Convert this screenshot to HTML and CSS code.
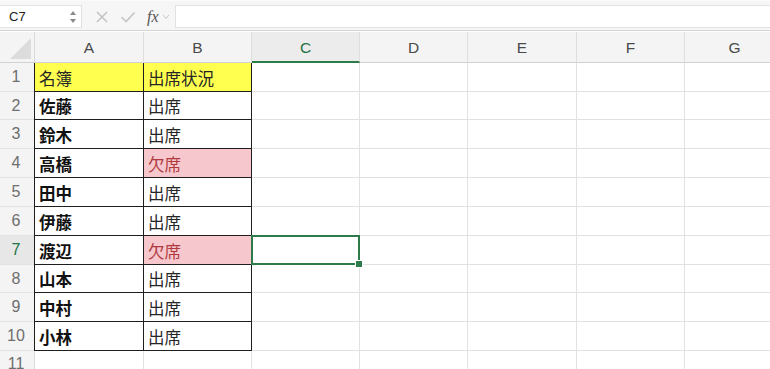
FILE: index.html
```html
<!DOCTYPE html>
<html lang="ja">
<head>
    <meta charset="UTF-8">
    <title>出席状況</title>
    <link rel="stylesheet" href="styles.css">
</head>
<body>
<div class="formula-bar">
    <div class="name-box">
        <span>C7</span>
        <svg class="spin" width="8" height="16" viewBox="0 0 8 16">
            <path d="M1 6 L4 2 L7 6 Z" fill="#8a8a8a"/>
            <path d="M1 10 L4 14 L7 10 Z" fill="#8a8a8a"/>
        </svg>
    </div>
    <div class="fx-tools">
        <svg width="14" height="14" viewBox="0 0 14 14">
            <path d="M2 2 L12 12 M12 2 L2 12" stroke="#c4c4c4" stroke-width="1.6" fill="none"/>
        </svg>
        <svg width="16" height="14" viewBox="0 0 16 14">
            <path d="M1.5 7 L6 11.5 L14.5 2.5" stroke="#c4c4c4" stroke-width="1.6" fill="none"/>
        </svg>
        <span class="fx">fx</span>
        <svg width="8" height="6" viewBox="0 0 8 6">
            <path d="M1 1 L4 4.5 L7 1" stroke="#c4c4c4" stroke-width="1" fill="none"/>
        </svg>
    </div>
    <div class="formula-input"></div>
</div>

<div class="sheet">
    <div class="corner"><span></span></div>
    <div class="col-head">A</div>
    <div class="col-head">B</div>
    <div class="col-head active">C</div>
    <div class="col-head">D</div>
    <div class="col-head">E</div>
    <div class="col-head">F</div>
    <div class="col-head">G</div>

    <div class="row-head">1</div>
    <div class="cell t first yellow">名簿</div>
    <div class="cell t yellow">出席状況</div>
    <div class="cell"></div><div class="cell"></div><div class="cell"></div><div class="cell"></div><div class="cell"></div>

    <div class="row-head">2</div>
    <div class="cell t first bold">佐藤</div>
    <div class="cell t">出席</div>
    <div class="cell"></div><div class="cell"></div><div class="cell"></div><div class="cell"></div><div class="cell"></div>

    <div class="row-head">3</div>
    <div class="cell t first bold">鈴木</div>
    <div class="cell t">出席</div>
    <div class="cell"></div><div class="cell"></div><div class="cell"></div><div class="cell"></div><div class="cell"></div>

    <div class="row-head">4</div>
    <div class="cell t first bold">高橋</div>
    <div class="cell t absent">欠席</div>
    <div class="cell"></div><div class="cell"></div><div class="cell"></div><div class="cell"></div><div class="cell"></div>

    <div class="row-head">5</div>
    <div class="cell t first bold">田中</div>
    <div class="cell t">出席</div>
    <div class="cell"></div><div class="cell"></div><div class="cell"></div><div class="cell"></div><div class="cell"></div>

    <div class="row-head">6</div>
    <div class="cell t first bold">伊藤</div>
    <div class="cell t">出席</div>
    <div class="cell"></div><div class="cell"></div><div class="cell"></div><div class="cell"></div><div class="cell"></div>

    <div class="row-head active">7</div>
    <div class="cell t first bold">渡辺</div>
    <div class="cell t absent">欠席</div>
    <div class="cell selected"></div><div class="cell"></div><div class="cell"></div><div class="cell"></div><div class="cell"></div>

    <div class="row-head">8</div>
    <div class="cell t first bold">山本</div>
    <div class="cell t">出席</div>
    <div class="cell"></div><div class="cell"></div><div class="cell"></div><div class="cell"></div><div class="cell"></div>

    <div class="row-head">9</div>
    <div class="cell t first bold">中村</div>
    <div class="cell t">出席</div>
    <div class="cell"></div><div class="cell"></div><div class="cell"></div><div class="cell"></div><div class="cell"></div>

    <div class="row-head">10</div>
    <div class="cell t first bold">小林</div>
    <div class="cell t">出席</div>
    <div class="cell"></div><div class="cell"></div><div class="cell"></div><div class="cell"></div><div class="cell"></div>

    <div class="row-head last">11</div>
    <div class="cell"></div><div class="cell"></div><div class="cell"></div><div class="cell"></div><div class="cell"></div><div class="cell"></div><div class="cell"></div>
</div>
</body>
</html>
```

FILE: styles.css
```css
* {
    margin: 0;
    padding: 0;
    box-sizing: border-box;
}

body {
    background: #ffffff;
    font-family: "Liberation Sans", "Noto Sans CJK JP", sans-serif;
    overflow: hidden;
}

/* formula bar */
.formula-bar {
    display: flex;
    align-items: stretch;
    height: 31px;
    padding: 4px 0 2px 0;
    background: #f6f6f6;
    border-top: 1px solid #fbfbfb;
    border-bottom: 1px solid #d4d4d4;
}

.name-box {
    width: 82px;
    display: flex;
    align-items: center;
    justify-content: space-between;
    padding: 0 4px 0 9px;
    background: #ffffff;
    border-top: 1px solid #e4e4e4;
    border-bottom: 1px solid #e4e4e4;
    border-right: 1px solid #e0e0e0;
    font-size: 13px;
    color: #222;
}

.fx-tools {
    width: 93px;
    display: flex;
    align-items: center;
    padding-left: 13px;
    gap: 11px;
}

.fx-tools .fx {
    font-family: "Liberation Serif", serif;
    font-style: italic;
    font-size: 16px;
    color: #555;
    margin-right: -8px;
}

.formula-input {
    flex: 1;
    background: #ffffff;
    border: 1px solid #e2e2e2;
    border-right: none;
}

/* sheet grid */
.sheet {
    display: grid;
    grid-template-columns: 35px 109px 108px 108px 108px 109px 108px 100px;
    grid-template-rows: 31px 29px 28px 29px 29px 29px 29px 29px 28px 29px 29px 29px;
    margin-top: 1px;
}

.corner {
    background: #f4f4f4;
    border-right: 1px solid #d9d9d9;
    border-bottom: 1px solid #d2d2d2;
    position: relative;
}

.corner span {
    position: absolute;
    right: 3px;
    bottom: 3px;
    width: 0;
    height: 0;
    border-left: 21px solid transparent;
    border-bottom: 21px solid #dcdcdc;
}

.col-head {
    background: #f4f4f4;
    border-right: 1px solid #dedede;
    border-bottom: 1px solid #d2d2d2;
    display: flex;
    align-items: center;
    justify-content: center;
    font-size: 15.5px;
    color: #4a4a4a;
    padding-top: 1px;
}

.col-head.active {
    color: #217346;
    background: #ececec;
    border-bottom: 2px solid #2d7a4b;
    padding-top: 2px;
}

.row-head {
    background: #f4f4f4;
    border-right: 1px solid #d9d9d9;
    border-bottom: 1px solid #e2e2e2;
    display: flex;
    align-items: center;
    justify-content: center;
    font-size: 16px;
    color: #6e6e6e;
    padding-right: 2px;
}

.row-head.last {
    align-items: flex-start;
    padding-top: 4px;
}

.row-head.active {
    background: #e7e7e7;
    color: #217346;
    border-right: 1px solid #2d7a4b;
}

.cell {
    border-right: 1px solid #e1e1e1;
    border-bottom: 1px solid #e1e1e1;
    display: flex;
    align-items: center;
    padding: 1px 0 0 4px;
    font-family: "Noto Sans CJK JP", sans-serif;
    font-size: 16.5px;
    color: #262626;
    white-space: nowrap;
}

.cell.t {
    border-right: 1px solid #1e1e1e;
    border-bottom: 1px solid #1e1e1e;
}

.cell.first {
    box-shadow: -1px 0 0 #1e1e1e;
}

.cell.yellow {
    background: #ffff4f;
}

.cell.bold {
    font-weight: 700;
    color: #111;
}

.cell.absent {
    background: #f6c8ce;
    color: #b03a3e;
}

.cell.selected {
    position: relative;
}

.cell.selected::before {
    content: "";
    position: absolute;
    left: -1px;
    top: -1px;
    right: -1px;
    bottom: -1px;
    border: 2px solid #2d7a4b;
}

.cell.selected::after {
    content: "";
    position: absolute;
    right: -4px;
    bottom: -4px;
    width: 6px;
    height: 6px;
    background: #2d7a4b;
    border: 1px solid #ffffff;
}
```
